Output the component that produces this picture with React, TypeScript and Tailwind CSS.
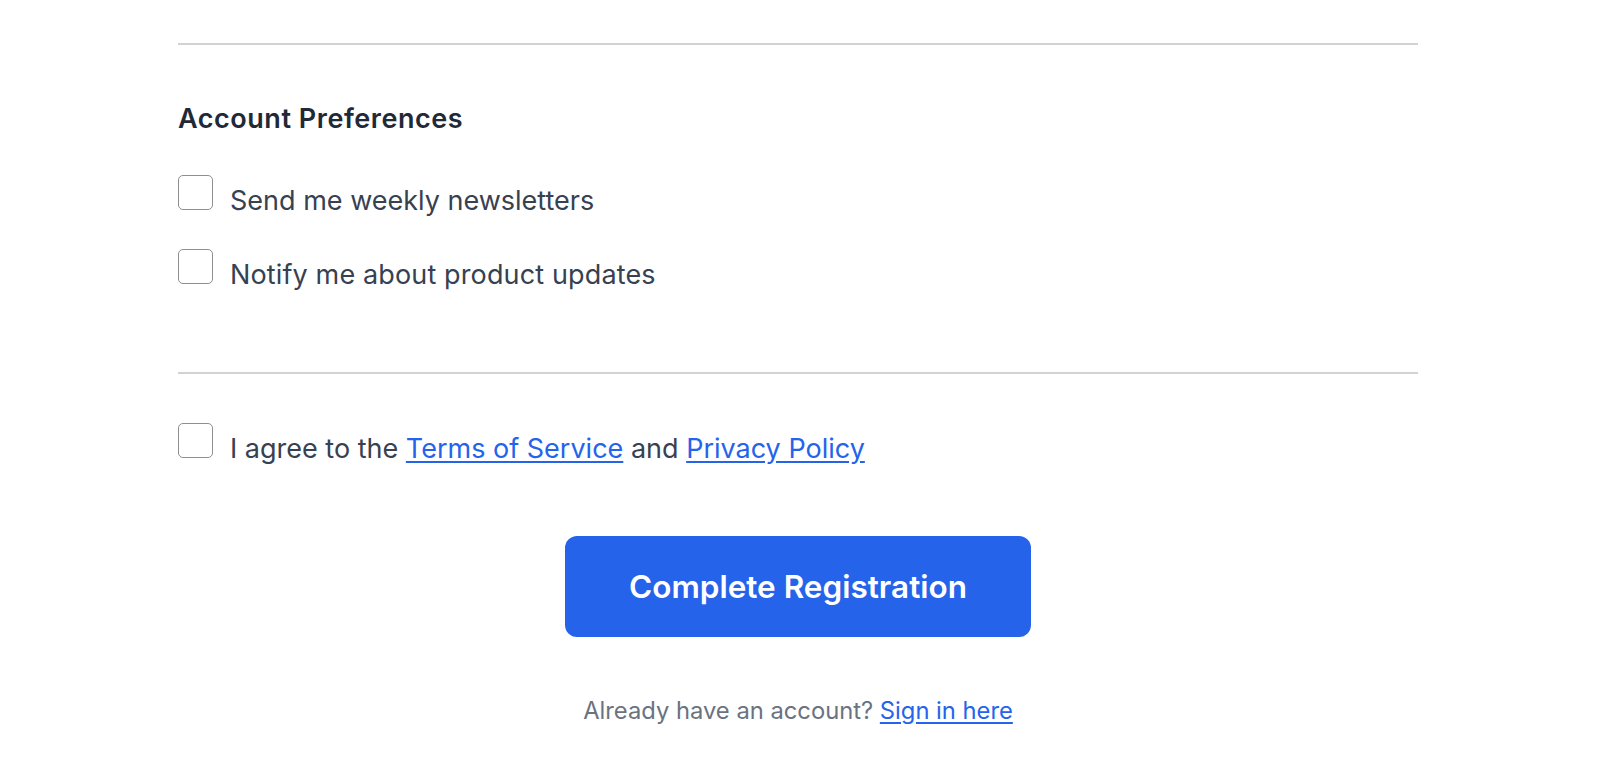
import React from "react";

function Box() {
  return (
    <span className="block w-[35px] h-[35px] shrink-0 rounded-[5px] border-[1.5px] border-[#8f8f8f] bg-white" />
  );
}

export default function App() {
  return (
    <div
      className="min-h-screen bg-white pt-[43px]"
      style={{ fontFamily: "Inter, 'Noto Sans', sans-serif" }}
    >
      <div className="ml-[178px] w-[1240px]">
        <div className="border-t-2 border-[#d2d2d2]" />
        <h2 className="mt-[58px] text-[27px] leading-[32px] font-semibold tracking-[0.02em] text-[#1f2937]">
          Account Preferences
        </h2>
        <div className="mt-[40px] flex flex-col gap-[30px]">
          <label className="flex items-start gap-[17px]">
            <Box />
            <span className="mt-[8px] text-[27px] leading-[36px] text-[#374151]">
              Send me weekly newsletters
            </span>
          </label>
          <label className="flex items-start gap-[17px]">
            <Box />
            <span className="mt-[8px] text-[27px] leading-[36px] tracking-[0.005em] text-[#374151]">
              Notify me about product updates
            </span>
          </label>
        </div>
        <div className="mt-[79px] border-t-2 border-[#d2d2d2]" />
        <label className="mt-[49px] flex items-start gap-[17px]">
          <Box />
          <span className="mt-[8px] text-[27px] leading-[36px] text-[#374151]">
            I agree to the{" "}
            <a className="text-[#2563eb] underline underline-offset-[3px]">Terms of Service</a>{" "}
            and{" "}
            <a className="text-[#2563eb] underline underline-offset-[3px]">Privacy Policy</a>
          </span>
        </label>
        <button className="mx-auto mt-[69px] flex h-[101px] w-[466px] items-center justify-center rounded-[12px] bg-[#2563eb] text-[31.5px] font-semibold text-white">
          Complete Registration
        </button>
        <p className="mt-[58px] text-center text-[23.75px] leading-[32px] text-[#6b7280]">
          Already have an account?{" "}
          <a className="text-[#2563eb] underline underline-offset-[3px]">Sign in here</a>
        </p>
      </div>
    </div>
  );
}
